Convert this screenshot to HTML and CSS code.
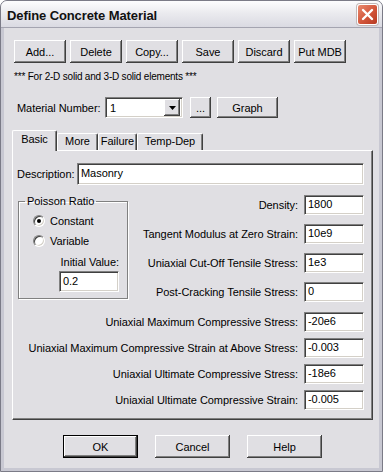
FILE: index.html
```html
<!DOCTYPE html>
<html>
<head>
<meta charset="utf-8">
<link rel="stylesheet" href="styles.css">
</head>
<body>
<div class="window">
  <div class="titlebar">
    <span class="title">Define Concrete Material</span>
    <span class="close">
      <svg width="21" height="21" viewBox="0 0 21 21">
        <path d="M6 6 L15 15 M15 6 L6 15" stroke="#fff" stroke-width="2.4" stroke-linecap="round"/>
      </svg>
    </span>
  </div>
  <div class="client">
    <div class="toolbar">
      <button class="btn">Add...</button>
      <button class="btn">Delete</button>
      <button class="btn">Copy...</button>
      <button class="btn">Save</button>
      <button class="btn">Discard</button>
      <button class="btn">Put MDB</button>
    </div>
    <div class="note">*** For 2-D solid and 3-D solid elements ***</div>
    <div class="matrow">
      <span class="matlabel">Material Number:</span>
      <div class="combo">
        <span class="combo-val">1</span>
        <span class="combo-btn">
          <svg width="7" height="4" viewBox="0 0 7 4"><path d="M0 0 H7 L3.5 4 Z" fill="#000"/></svg>
        </span>
      </div>
      <button class="btn btn-dots">...</button>
      <button class="btn btn-graph">Graph</button>
    </div>
    <div class="tabs">
      <div class="tab tab-basic active">Basic</div>
      <div class="tab tab-more">More</div>
      <div class="tab tab-failure">Failure</div>
      <div class="tab tab-temp">Temp-Dep</div>
    </div>
    <div class="panel">
      <div class="desc-row">
        <span class="desc-label">Description:</span>
        <div class="field field-wide">Masonry</div>
      </div>
      <div class="upper">
        <fieldset class="group">
          <legend>Poisson Ratio</legend>
          <div class="radio-row"><span class="radio checked"></span>Constant</div>
          <div class="radio-row"><span class="radio"></span>Variable</div>
          <div class="init-label">Initial Value:</div>
          <div class="field field-init">0.2</div>
        </fieldset>
        <div class="rows rows-upper">
          <div class="row"><span>Density:</span><div class="field">1800</div></div>
          <div class="row"><span>Tangent Modulus at Zero Strain:</span><div class="field">10e9</div></div>
          <div class="row"><span>Uniaxial Cut-Off Tensile Stress:</span><div class="field">1e3</div></div>
          <div class="row"><span>Post-Cracking Tensile Stress:</span><div class="field">0</div></div>
        </div>
      </div>
      <div class="rows rows-lower">
        <div class="row"><span>Uniaxial Maximum Compressive Stress:</span><div class="field">-20e6</div></div>
        <div class="row"><span>Uniaxial Maximum Compressive Strain at Above Stress:</span><div class="field">-0.003</div></div>
        <div class="row"><span>Uniaxial Ultimate Compressive Stress:</span><div class="field">-18e6</div></div>
        <div class="row"><span>Uniaxial Ultimate Compressive Strain:</span><div class="field">-0.005</div></div>
      </div>
    </div>
    <div class="footer">
      <button class="btn btn-foot btn-default">OK</button>
      <button class="btn btn-foot">Cancel</button>
      <button class="btn btn-foot">Help</button>
    </div>
  </div>
</div>
</body>
</html>
```
FILE: styles.css
```css
* { box-sizing: border-box; }

body {
  margin: 0;
  background: #ffffff;
  font-family: "Liberation Sans", Arial, sans-serif;
  font-size: 11px;
  letter-spacing: -0.05px;
  color: #000;
}

.window {
  width: 383px;
  height: 472px;
  border: 1px solid #7b7b87;
  border-radius: 7px 7px 0 0;
  background: #c8c8d2;
  display: flex;
  flex-direction: column;
  overflow: hidden;
}

.titlebar {
  height: 27px;
  flex: none;
  display: flex;
  align-items: center;
  justify-content: space-between;
  padding: 2px 4px 0 6px;
  background: linear-gradient(#fdfdfe, #ebebef 45%, #dadae2);
  border-bottom: 1px solid #a4a4b0;
}

.title {
  font-weight: bold;
  font-size: 13px;
  letter-spacing: -0.1px;
  color: #111;
}

.close {
  width: 21px;
  height: 21px;
  border-radius: 3px;
  border: 1px solid #fff;
  background: linear-gradient(135deg, #e98a6e, #d2553a 55%, #b63a22);
  box-shadow: 0 0 0 1px #c0b8b8;
  display: flex;
  align-items: center;
  justify-content: center;
  margin-top: -1px;
}

.close svg { display: block; margin: -1px; }

.client {
  flex: 1;
  margin: 0 3px 3px;
  background: #e0dfe3;
  padding: 12px 6px 0 8px;
  display: flex;
  flex-direction: column;
}

.btn {
  font: inherit;
  letter-spacing: inherit;
  color: #000;
  margin: 0;
  padding: 0;
  border: none;
  background: #e0dfe3;
  box-shadow: inset -1px -1px #404040, inset 1px 1px #fff, inset -2px -2px #808080;
  height: 23px;
  text-align: center;
}

.toolbar {
  display: flex;
  gap: 4px;
  padding-left: 2px;
}

.toolbar .btn { width: 52px; }

.note {
  margin-top: 8px;
  padding-left: 2px;
  font-size: 10px;
  letter-spacing: -0.2px;
  line-height: 12px;
}

.matrow {
  margin-top: 14px;
  height: 21px;
  display: flex;
  align-items: center;
  padding-left: 5px;
}

.matlabel { width: 88px; }

.field, .combo {
  background: #fff;
  border: 1px solid;
  border-color: #808080 #fff #fff #808080;
  box-shadow: inset 1px 1px #404040, inset -1px -1px #d4d0c8;
}

.combo {
  width: 78px;
  height: 21px;
  display: flex;
  align-items: center;
  justify-content: space-between;
  padding: 2px;
}

.combo-val { padding-left: 2px; }

.combo-btn {
  width: 16px;
  height: 17px;
  background: #e0dfe3;
  box-shadow: inset -1px -1px #404040, inset 1px 1px #fff, inset -2px -2px #808080;
  display: flex;
  align-items: center;
  justify-content: center;
}

.combo-btn svg { display: block; }

.btn-dots { width: 21px; height: 21px; margin-left: 7px; }
.btn-graph { width: 61px; height: 21px; margin-left: 6px; }

.tabs {
  margin-top: 12px;
  height: 20px;
  display: flex;
  align-items: flex-end;
}

.tab {
  height: 17px;
  line-height: 15px;
  text-align: center;
  background: #e0dfe3;
  border: 1px solid;
  border-color: #fff #404040 transparent #fff;
  border-bottom: none;
  border-radius: 2px 2px 0 0;
  box-shadow: inset -1px 0 #808080;
}

.tab.active {
  height: 21px;
  line-height: 17px;
  margin-bottom: -1px;
  position: relative;
  z-index: 1;
}

.tab-basic { width: 45px; }
.tab-more { width: 41px; }
.tab-failure { width: 39px; }
.tab-temp { width: 66px; }

.panel {
  width: 361px;
  height: 270px;
  border: 1px solid;
  border-color: #fff #404040 #404040 #fff;
  box-shadow: inset -1px -1px #808080;
  padding: 12px 8px 0 4px;
}

.desc-row {
  display: flex;
  align-items: center;
  height: 22px;
}

.desc-label { width: 60px; }

.field {
  height: 20px;
  width: 60px;
  padding: 0 3px;
  line-height: 17px;
  white-space: nowrap;
}

.field-wide { flex: 1; height: 22px; line-height: 18px; }

.upper {
  margin-top: 10px;
  display: flex;
  align-items: flex-start;
}

.group {
  margin: 0 0 0 1px;
  width: 110px;
  height: 104px;
  border: 1px solid #808080;
  box-shadow: inset 1px 1px #fff, 1px 1px #fff;
  padding: 3px 0 0 0;
}

.group legend {
  margin-left: 6px;
  padding: 0 2px;
  line-height: 13px;
}

.radio-row {
  height: 20px;
  display: flex;
  align-items: center;
  padding-left: 14px;
}

.radio {
  width: 12px;
  height: 12px;
  border-radius: 50%;
  background: #fff;
  border: 1px solid;
  border-color: #808080 #fff #fff #808080;
  box-shadow: inset 1px 1px #404040, inset -1px -1px #d4d0c8;
  margin-right: 5px;
  display: flex;
  align-items: center;
  justify-content: center;
}

.radio.checked::after {
  content: "";
  width: 4px;
  height: 4px;
  border-radius: 50%;
  background: #000;
}

.init-label {
  margin-top: 5px;
  width: 100px;
  text-align: right;
  line-height: 12px;
}

.field-init {
  margin: 3px 0 0 40px;
  height: 21px;
  line-height: 18px;
}

.rows {
  display: flex;
  flex-direction: column;
}

.rows-upper {
  flex: 1;
  gap: 9px;
}

.rows-lower {
  margin-top: 10px;
  gap: 6px;
}

.row {
  height: 20px;
  display: flex;
  justify-content: flex-end;
  align-items: center;
  gap: 6px;
  white-space: nowrap;
}

.footer {
  margin-top: 15px;
  display: flex;
  justify-content: center;
  gap: 17px;
}

.btn-foot { width: 75px; }

.btn-default {
  border: 1px solid #000;
  box-shadow: inset -1px -1px #404040, inset 1px 1px #fff, inset -2px -2px #808080;
}
```
